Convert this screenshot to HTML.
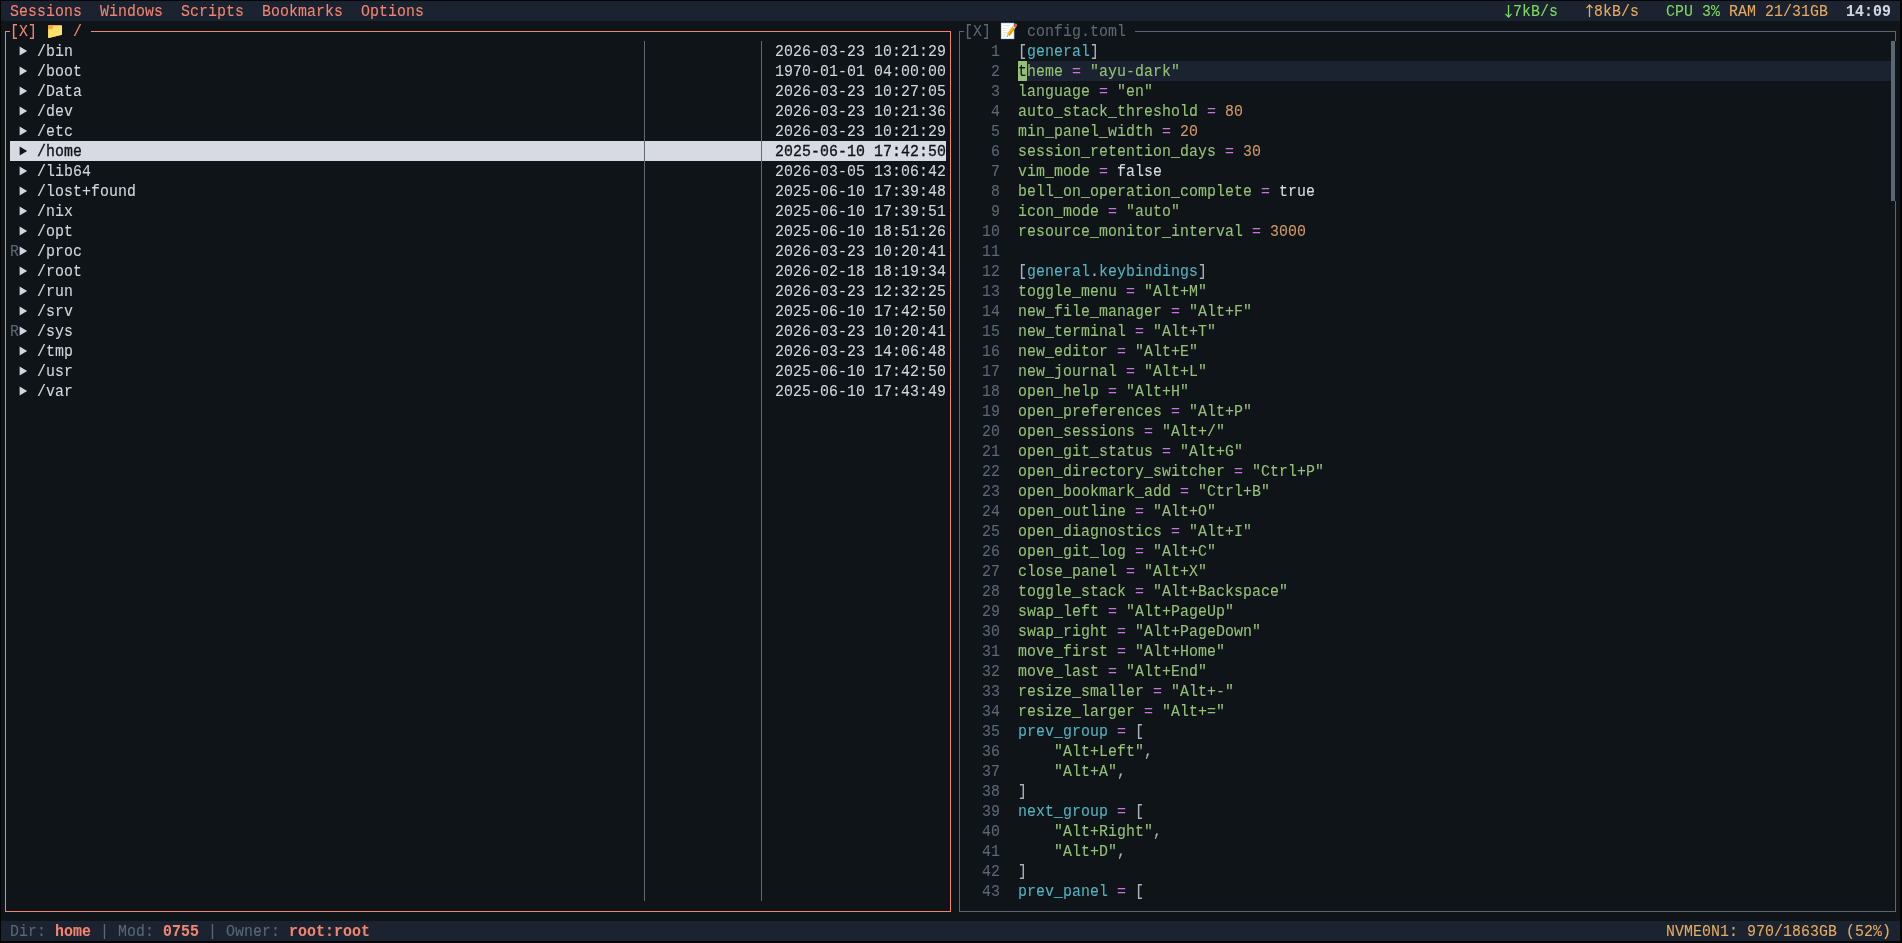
<!DOCTYPE html>
<html><head><meta charset="utf-8"><title>config.toml</title>
<style>
html,body{margin:0;padding:0;background:#050505;overflow:hidden}
body{width:1902px;height:943px;position:relative}
#g{position:absolute;left:1px;top:1px;width:1899px;height:940px;background:#0f1419}
#s{position:absolute;left:1px;top:1px;width:1899px;height:940px;overflow:hidden;will-change:transform;
font-family:"Liberation Mono",monospace;font-size:16.0px;letter-spacing:0.0759px;line-height:20px;
font-kerning:none;-webkit-text-stroke:0.1px;font-variant-ligatures:none}
#s i{position:absolute;display:block}
#s .t{position:absolute;height:20px;white-space:pre;transform:scaleX(0.93);transform-origin:0 0}
#s .a{position:absolute;display:block}
</style></head><body><div id="g"></div><div id="s">
<i style="left:0px;top:0px;width:1899px;height:20px;background:#1b2230"></i>
<i style="left:0px;top:920px;width:1899px;height:20px;background:#1b2230"></i>
<span class="t" style="left:9px;top:1px"><span style="color:#f18570">Sessions  Windows  Scripts  Bookmarks  Options</span></span>
<svg class="a" style="left:1503px;top:0px" width="9" height="20" viewBox="0 0 9 20"><path d="M4.5 3.9V16M1.5 12.9L4.5 16.1L7.5 12.9" fill="none" stroke="#7fd962" stroke-width="1.3"/></svg>
<span class="t" style="left:1512px;top:1px"><span style="color:#7fd962">7kB/s</span></span>
<svg class="a" style="left:1584px;top:0px" width="9" height="20" viewBox="0 0 9 20"><path d="M4.5 4V15.9M1.5 7.1L4.5 3.9L7.5 7.1" fill="none" stroke="#e6ab5e" stroke-width="1.3"/></svg>
<span class="t" style="left:1593px;top:1px"><span style="color:#e6ab5e">8kB/s</span></span>
<span class="t" style="left:1665px;top:1px"><span style="color:#7fd962">CPU 3%</span><span style="color:#d3d6df"> </span><span style="color:#e6ab5e">RAM 21/31GB</span></span>
<span class="t" style="left:1845px;top:1px"><span style="color:#d3d6df;font-weight:bold">14:09</span></span>
<i style="left:4px;top:30px;width:1px;height:881px;background:#f18570"></i>
<i style="left:949px;top:30px;width:1px;height:881px;background:#f18570"></i>
<i style="left:4px;top:30px;width:5px;height:1px;background:#f18570"></i>
<i style="left:90px;top:30px;width:860px;height:1px;background:#f18570"></i>
<i style="left:4px;top:910px;width:946px;height:1px;background:#f18570"></i>
<span class="t" style="left:9px;top:21px"><span style="color:#f18570">[X]</span></span>
<span class="t" style="left:72px;top:21px"><span style="color:#f18570">/</span></span>
<svg class="a" style="left:46px;top:23px" width="17" height="16" viewBox="0 0 17 16"><path d="M1 1.7 Q1 1 1.7 1 L14.3 1 Q15 1 15 1.7 L15 10.7 L1.8 13.9 Q1 14.1 1 13.3 Z" fill="#f2aa3e"/><path d="M1.3 5.2 L5.3 5.2 L6.7 2.1 L15 2.1 L15 10.7 L1.8 13.9 Q1.3 14 1.3 13.4 Z" fill="#fde26c"/></svg>
<i style="left:643px;top:40px;width:1px;height:860px;background:#5f6975"></i>
<i style="left:760px;top:40px;width:1px;height:860px;background:#5f6975"></i>
<svg class="a" style="left:18px;top:45px" width="9" height="10" viewBox="0 0 9 10"><path d="M0.6 0.6 L8.2 5 L0.6 9.4 Z" fill="#d3d6df"/></svg>
<span class="t" style="left:36px;top:41px"><span style="color:#d3d6df">/bin</span></span>
<span class="t" style="left:774px;top:41px"><span style="color:#d3d6df">2026-03-23 10:21:29</span></span>
<svg class="a" style="left:18px;top:65px" width="9" height="10" viewBox="0 0 9 10"><path d="M0.6 0.6 L8.2 5 L0.6 9.4 Z" fill="#d3d6df"/></svg>
<span class="t" style="left:36px;top:61px"><span style="color:#d3d6df">/boot</span></span>
<span class="t" style="left:774px;top:61px"><span style="color:#d3d6df">1970-01-01 04:00:00</span></span>
<svg class="a" style="left:18px;top:85px" width="9" height="10" viewBox="0 0 9 10"><path d="M0.6 0.6 L8.2 5 L0.6 9.4 Z" fill="#d3d6df"/></svg>
<span class="t" style="left:36px;top:81px"><span style="color:#d3d6df">/Data</span></span>
<span class="t" style="left:774px;top:81px"><span style="color:#d3d6df">2026-03-23 10:27:05</span></span>
<svg class="a" style="left:18px;top:105px" width="9" height="10" viewBox="0 0 9 10"><path d="M0.6 0.6 L8.2 5 L0.6 9.4 Z" fill="#d3d6df"/></svg>
<span class="t" style="left:36px;top:101px"><span style="color:#d3d6df">/dev</span></span>
<span class="t" style="left:774px;top:101px"><span style="color:#d3d6df">2026-03-23 10:21:36</span></span>
<svg class="a" style="left:18px;top:125px" width="9" height="10" viewBox="0 0 9 10"><path d="M0.6 0.6 L8.2 5 L0.6 9.4 Z" fill="#d3d6df"/></svg>
<span class="t" style="left:36px;top:121px"><span style="color:#d3d6df">/etc</span></span>
<span class="t" style="left:774px;top:121px"><span style="color:#d3d6df">2026-03-23 10:21:29</span></span>
<i style="left:9px;top:140px;width:936px;height:20px;background:#d8dae3"></i>
<i style="left:643px;top:140px;width:1px;height:20px;background:#5f6975"></i>
<i style="left:760px;top:140px;width:1px;height:20px;background:#5f6975"></i>
<svg class="a" style="left:18px;top:145px" width="9" height="10" viewBox="0 0 9 10"><path d="M0.6 0.6 L8.2 5 L0.6 9.4 Z" fill="#0f1419"/></svg>
<span class="t" style="left:36px;top:141px;-webkit-text-stroke:0.35px"><span style="color:#0f1419">/home</span></span>
<span class="t" style="left:774px;top:141px;-webkit-text-stroke:0.35px"><span style="color:#0f1419">2025-06-10 17:42:50</span></span>
<svg class="a" style="left:18px;top:165px" width="9" height="10" viewBox="0 0 9 10"><path d="M0.6 0.6 L8.2 5 L0.6 9.4 Z" fill="#d3d6df"/></svg>
<span class="t" style="left:36px;top:161px"><span style="color:#d3d6df">/lib64</span></span>
<span class="t" style="left:774px;top:161px"><span style="color:#d3d6df">2026-03-05 13:06:42</span></span>
<svg class="a" style="left:18px;top:185px" width="9" height="10" viewBox="0 0 9 10"><path d="M0.6 0.6 L8.2 5 L0.6 9.4 Z" fill="#d3d6df"/></svg>
<span class="t" style="left:36px;top:181px"><span style="color:#d3d6df">/lost+found</span></span>
<span class="t" style="left:774px;top:181px"><span style="color:#d3d6df">2025-06-10 17:39:48</span></span>
<svg class="a" style="left:18px;top:205px" width="9" height="10" viewBox="0 0 9 10"><path d="M0.6 0.6 L8.2 5 L0.6 9.4 Z" fill="#d3d6df"/></svg>
<span class="t" style="left:36px;top:201px"><span style="color:#d3d6df">/nix</span></span>
<span class="t" style="left:774px;top:201px"><span style="color:#d3d6df">2025-06-10 17:39:51</span></span>
<svg class="a" style="left:18px;top:225px" width="9" height="10" viewBox="0 0 9 10"><path d="M0.6 0.6 L8.2 5 L0.6 9.4 Z" fill="#d3d6df"/></svg>
<span class="t" style="left:36px;top:221px"><span style="color:#d3d6df">/opt</span></span>
<span class="t" style="left:774px;top:221px"><span style="color:#d3d6df">2025-06-10 18:51:26</span></span>
<span class="t" style="left:9px;top:241px"><span style="color:#5c6773">R</span></span>
<svg class="a" style="left:18px;top:245px" width="9" height="10" viewBox="0 0 9 10"><path d="M0.6 0.6 L8.2 5 L0.6 9.4 Z" fill="#d3d6df"/></svg>
<span class="t" style="left:36px;top:241px"><span style="color:#d3d6df">/proc</span></span>
<span class="t" style="left:774px;top:241px"><span style="color:#d3d6df">2026-03-23 10:20:41</span></span>
<svg class="a" style="left:18px;top:265px" width="9" height="10" viewBox="0 0 9 10"><path d="M0.6 0.6 L8.2 5 L0.6 9.4 Z" fill="#d3d6df"/></svg>
<span class="t" style="left:36px;top:261px"><span style="color:#d3d6df">/root</span></span>
<span class="t" style="left:774px;top:261px"><span style="color:#d3d6df">2026-02-18 18:19:34</span></span>
<svg class="a" style="left:18px;top:285px" width="9" height="10" viewBox="0 0 9 10"><path d="M0.6 0.6 L8.2 5 L0.6 9.4 Z" fill="#d3d6df"/></svg>
<span class="t" style="left:36px;top:281px"><span style="color:#d3d6df">/run</span></span>
<span class="t" style="left:774px;top:281px"><span style="color:#d3d6df">2026-03-23 12:32:25</span></span>
<svg class="a" style="left:18px;top:305px" width="9" height="10" viewBox="0 0 9 10"><path d="M0.6 0.6 L8.2 5 L0.6 9.4 Z" fill="#d3d6df"/></svg>
<span class="t" style="left:36px;top:301px"><span style="color:#d3d6df">/srv</span></span>
<span class="t" style="left:774px;top:301px"><span style="color:#d3d6df">2025-06-10 17:42:50</span></span>
<span class="t" style="left:9px;top:321px"><span style="color:#5c6773">R</span></span>
<svg class="a" style="left:18px;top:325px" width="9" height="10" viewBox="0 0 9 10"><path d="M0.6 0.6 L8.2 5 L0.6 9.4 Z" fill="#d3d6df"/></svg>
<span class="t" style="left:36px;top:321px"><span style="color:#d3d6df">/sys</span></span>
<span class="t" style="left:774px;top:321px"><span style="color:#d3d6df">2026-03-23 10:20:41</span></span>
<svg class="a" style="left:18px;top:345px" width="9" height="10" viewBox="0 0 9 10"><path d="M0.6 0.6 L8.2 5 L0.6 9.4 Z" fill="#d3d6df"/></svg>
<span class="t" style="left:36px;top:341px"><span style="color:#d3d6df">/tmp</span></span>
<span class="t" style="left:774px;top:341px"><span style="color:#d3d6df">2026-03-23 14:06:48</span></span>
<svg class="a" style="left:18px;top:365px" width="9" height="10" viewBox="0 0 9 10"><path d="M0.6 0.6 L8.2 5 L0.6 9.4 Z" fill="#d3d6df"/></svg>
<span class="t" style="left:36px;top:361px"><span style="color:#d3d6df">/usr</span></span>
<span class="t" style="left:774px;top:361px"><span style="color:#d3d6df">2025-06-10 17:42:50</span></span>
<svg class="a" style="left:18px;top:385px" width="9" height="10" viewBox="0 0 9 10"><path d="M0.6 0.6 L8.2 5 L0.6 9.4 Z" fill="#d3d6df"/></svg>
<span class="t" style="left:36px;top:381px"><span style="color:#d3d6df">/var</span></span>
<span class="t" style="left:774px;top:381px"><span style="color:#d3d6df">2025-06-10 17:43:49</span></span>
<span class="t" style="left:9px;top:921px"><span style="color:#5c6773">Dir: </span><span style="color:#f18570;font-weight:bold">home</span><span style="color:#5c6773"> | </span><span style="color:#5c6773">Mod: </span><span style="color:#f18570;font-weight:bold">0755</span><span style="color:#5c6773"> | </span><span style="color:#5c6773">Owner: </span><span style="color:#f18570;font-weight:bold">root:root</span></span>
<span class="t" style="left:1665px;top:921px"><span style="color:#e6ab5e">NVME0N1: 970/1863GB (52%)</span></span>
<i style="left:958px;top:30px;width:1px;height:881px;background:#5c6773"></i>
<i style="left:958px;top:30px;width:5px;height:1px;background:#5c6773"></i>
<i style="left:1134px;top:30px;width:761px;height:1px;background:#5c6773"></i>
<i style="left:1894px;top:30px;width:1px;height:10px;background:#5c6773"></i>
<i style="left:1890px;top:40px;width:4px;height:160px;background:#5c6773"></i>
<i style="left:1894px;top:200px;width:1px;height:711px;background:#5c6773"></i>
<i style="left:958px;top:910px;width:937px;height:1px;background:#5c6773"></i>
<span class="t" style="left:963px;top:21px"><span style="color:#5c6773">[X]</span></span>
<span class="t" style="left:1026px;top:21px"><span style="color:#5c6773">config.toml</span></span>
<svg class="a" style="left:999px;top:21px" width="20" height="19" viewBox="0 0 20 19"><rect x="0.9" y="0.8" width="13.4" height="16.3" fill="#b9e0fa"/><rect x="1.9" y="1.7" width="11.5" height="14.5" fill="#ffffff"/><path d="M3 3.6h6M3 6.5h4M3 8.5h3M3 10.6h4.5M3 12.6h3M3 14.6h2.2" stroke="#d3d7dc" stroke-width="0.8"/><g transform="translate(6.8,14.7) rotate(-52.8)"><path d="M0 0 L2.6 -1.65 L2.6 1.65 Z" fill="#f3cf9a"/><path d="M0 0 L1 -0.7 L1 0.7 Z" fill="#3a3a3a"/><rect x="2.6" y="-1.65" width="8.6" height="3.3" fill="#f5b212"/><rect x="2.6" y="0.3" width="8.6" height="1.35" fill="#e89a0c"/><rect x="11.2" y="-1.65" width="1.6" height="3.3" fill="#a9dcea"/><path d="M12.8 -1.65 L14.2 -1.65 Q16.2 -1.65 16.2 0 Q16.2 1.65 14.2 1.65 L12.8 1.65 Z" fill="#f2554b"/></g></svg>
<i style="left:1017px;top:60px;width:873px;height:20px;background:#1b2230"></i>
<i style="left:1017px;top:60px;width:9px;height:20px;background:#96c077"></i>
<span class="t" style="left:963px;top:41px"><span style="color:#5c6773">   1</span></span>
<span class="t" style="left:1017px;top:41px"><span style="color:#abb2bf">[</span><span style="color:#53b2bf">general</span><span style="color:#abb2bf">]</span></span>
<span class="t" style="left:963px;top:61px"><span style="color:#5c6773">   2</span></span>
<span class="t" style="left:1017px;top:61px"><span style="color:#0f1419">t</span><span style="color:#96c077">heme</span><span style="color:#abb2bf"> </span><span style="color:#c678dd">=</span><span style="color:#abb2bf"> </span><span style="color:#96c077">&quot;ayu-dark&quot;</span></span>
<span class="t" style="left:963px;top:81px"><span style="color:#5c6773">   3</span></span>
<span class="t" style="left:1017px;top:81px"><span style="color:#96c077">language</span><span style="color:#abb2bf"> </span><span style="color:#c678dd">=</span><span style="color:#abb2bf"> </span><span style="color:#96c077">&quot;en&quot;</span></span>
<span class="t" style="left:963px;top:101px"><span style="color:#5c6773">   4</span></span>
<span class="t" style="left:1017px;top:101px"><span style="color:#96c077">auto_stack_threshold</span><span style="color:#abb2bf"> </span><span style="color:#c678dd">=</span><span style="color:#abb2bf"> </span><span style="color:#d19a66">80</span></span>
<span class="t" style="left:963px;top:121px"><span style="color:#5c6773">   5</span></span>
<span class="t" style="left:1017px;top:121px"><span style="color:#96c077">min_panel_width</span><span style="color:#abb2bf"> </span><span style="color:#c678dd">=</span><span style="color:#abb2bf"> </span><span style="color:#d19a66">20</span></span>
<span class="t" style="left:963px;top:141px"><span style="color:#5c6773">   6</span></span>
<span class="t" style="left:1017px;top:141px"><span style="color:#96c077">session_retention_days</span><span style="color:#abb2bf"> </span><span style="color:#c678dd">=</span><span style="color:#abb2bf"> </span><span style="color:#d19a66">30</span></span>
<span class="t" style="left:963px;top:161px"><span style="color:#5c6773">   7</span></span>
<span class="t" style="left:1017px;top:161px"><span style="color:#96c077">vim_mode</span><span style="color:#abb2bf"> </span><span style="color:#c678dd">=</span><span style="color:#abb2bf"> </span><span style="color:#d9dbe3">false</span></span>
<span class="t" style="left:963px;top:181px"><span style="color:#5c6773">   8</span></span>
<span class="t" style="left:1017px;top:181px"><span style="color:#96c077">bell_on_operation_complete</span><span style="color:#abb2bf"> </span><span style="color:#c678dd">=</span><span style="color:#abb2bf"> </span><span style="color:#d9dbe3">true</span></span>
<span class="t" style="left:963px;top:201px"><span style="color:#5c6773">   9</span></span>
<span class="t" style="left:1017px;top:201px"><span style="color:#96c077">icon_mode</span><span style="color:#abb2bf"> </span><span style="color:#c678dd">=</span><span style="color:#abb2bf"> </span><span style="color:#96c077">&quot;auto&quot;</span></span>
<span class="t" style="left:963px;top:221px"><span style="color:#5c6773">  10</span></span>
<span class="t" style="left:1017px;top:221px"><span style="color:#96c077">resource_monitor_interval</span><span style="color:#abb2bf"> </span><span style="color:#c678dd">=</span><span style="color:#abb2bf"> </span><span style="color:#d19a66">3000</span></span>
<span class="t" style="left:963px;top:241px"><span style="color:#5c6773">  11</span></span>
<span class="t" style="left:963px;top:261px"><span style="color:#5c6773">  12</span></span>
<span class="t" style="left:1017px;top:261px"><span style="color:#abb2bf">[</span><span style="color:#53b2bf">general</span><span style="color:#abb2bf">.</span><span style="color:#53b2bf">keybindings</span><span style="color:#abb2bf">]</span></span>
<span class="t" style="left:963px;top:281px"><span style="color:#5c6773">  13</span></span>
<span class="t" style="left:1017px;top:281px"><span style="color:#96c077">toggle_menu</span><span style="color:#abb2bf"> </span><span style="color:#c678dd">=</span><span style="color:#abb2bf"> </span><span style="color:#96c077">&quot;Alt+M&quot;</span></span>
<span class="t" style="left:963px;top:301px"><span style="color:#5c6773">  14</span></span>
<span class="t" style="left:1017px;top:301px"><span style="color:#96c077">new_file_manager</span><span style="color:#abb2bf"> </span><span style="color:#c678dd">=</span><span style="color:#abb2bf"> </span><span style="color:#96c077">&quot;Alt+F&quot;</span></span>
<span class="t" style="left:963px;top:321px"><span style="color:#5c6773">  15</span></span>
<span class="t" style="left:1017px;top:321px"><span style="color:#96c077">new_terminal</span><span style="color:#abb2bf"> </span><span style="color:#c678dd">=</span><span style="color:#abb2bf"> </span><span style="color:#96c077">&quot;Alt+T&quot;</span></span>
<span class="t" style="left:963px;top:341px"><span style="color:#5c6773">  16</span></span>
<span class="t" style="left:1017px;top:341px"><span style="color:#96c077">new_editor</span><span style="color:#abb2bf"> </span><span style="color:#c678dd">=</span><span style="color:#abb2bf"> </span><span style="color:#96c077">&quot;Alt+E&quot;</span></span>
<span class="t" style="left:963px;top:361px"><span style="color:#5c6773">  17</span></span>
<span class="t" style="left:1017px;top:361px"><span style="color:#96c077">new_journal</span><span style="color:#abb2bf"> </span><span style="color:#c678dd">=</span><span style="color:#abb2bf"> </span><span style="color:#96c077">&quot;Alt+L&quot;</span></span>
<span class="t" style="left:963px;top:381px"><span style="color:#5c6773">  18</span></span>
<span class="t" style="left:1017px;top:381px"><span style="color:#96c077">open_help</span><span style="color:#abb2bf"> </span><span style="color:#c678dd">=</span><span style="color:#abb2bf"> </span><span style="color:#96c077">&quot;Alt+H&quot;</span></span>
<span class="t" style="left:963px;top:401px"><span style="color:#5c6773">  19</span></span>
<span class="t" style="left:1017px;top:401px"><span style="color:#96c077">open_preferences</span><span style="color:#abb2bf"> </span><span style="color:#c678dd">=</span><span style="color:#abb2bf"> </span><span style="color:#96c077">&quot;Alt+P&quot;</span></span>
<span class="t" style="left:963px;top:421px"><span style="color:#5c6773">  20</span></span>
<span class="t" style="left:1017px;top:421px"><span style="color:#96c077">open_sessions</span><span style="color:#abb2bf"> </span><span style="color:#c678dd">=</span><span style="color:#abb2bf"> </span><span style="color:#96c077">&quot;Alt+/&quot;</span></span>
<span class="t" style="left:963px;top:441px"><span style="color:#5c6773">  21</span></span>
<span class="t" style="left:1017px;top:441px"><span style="color:#96c077">open_git_status</span><span style="color:#abb2bf"> </span><span style="color:#c678dd">=</span><span style="color:#abb2bf"> </span><span style="color:#96c077">&quot;Alt+G&quot;</span></span>
<span class="t" style="left:963px;top:461px"><span style="color:#5c6773">  22</span></span>
<span class="t" style="left:1017px;top:461px"><span style="color:#96c077">open_directory_switcher</span><span style="color:#abb2bf"> </span><span style="color:#c678dd">=</span><span style="color:#abb2bf"> </span><span style="color:#96c077">&quot;Ctrl+P&quot;</span></span>
<span class="t" style="left:963px;top:481px"><span style="color:#5c6773">  23</span></span>
<span class="t" style="left:1017px;top:481px"><span style="color:#96c077">open_bookmark_add</span><span style="color:#abb2bf"> </span><span style="color:#c678dd">=</span><span style="color:#abb2bf"> </span><span style="color:#96c077">&quot;Ctrl+B&quot;</span></span>
<span class="t" style="left:963px;top:501px"><span style="color:#5c6773">  24</span></span>
<span class="t" style="left:1017px;top:501px"><span style="color:#96c077">open_outline</span><span style="color:#abb2bf"> </span><span style="color:#c678dd">=</span><span style="color:#abb2bf"> </span><span style="color:#96c077">&quot;Alt+O&quot;</span></span>
<span class="t" style="left:963px;top:521px"><span style="color:#5c6773">  25</span></span>
<span class="t" style="left:1017px;top:521px"><span style="color:#96c077">open_diagnostics</span><span style="color:#abb2bf"> </span><span style="color:#c678dd">=</span><span style="color:#abb2bf"> </span><span style="color:#96c077">&quot;Alt+I&quot;</span></span>
<span class="t" style="left:963px;top:541px"><span style="color:#5c6773">  26</span></span>
<span class="t" style="left:1017px;top:541px"><span style="color:#96c077">open_git_log</span><span style="color:#abb2bf"> </span><span style="color:#c678dd">=</span><span style="color:#abb2bf"> </span><span style="color:#96c077">&quot;Alt+C&quot;</span></span>
<span class="t" style="left:963px;top:561px"><span style="color:#5c6773">  27</span></span>
<span class="t" style="left:1017px;top:561px"><span style="color:#96c077">close_panel</span><span style="color:#abb2bf"> </span><span style="color:#c678dd">=</span><span style="color:#abb2bf"> </span><span style="color:#96c077">&quot;Alt+X&quot;</span></span>
<span class="t" style="left:963px;top:581px"><span style="color:#5c6773">  28</span></span>
<span class="t" style="left:1017px;top:581px"><span style="color:#96c077">toggle_stack</span><span style="color:#abb2bf"> </span><span style="color:#c678dd">=</span><span style="color:#abb2bf"> </span><span style="color:#96c077">&quot;Alt+Backspace&quot;</span></span>
<span class="t" style="left:963px;top:601px"><span style="color:#5c6773">  29</span></span>
<span class="t" style="left:1017px;top:601px"><span style="color:#96c077">swap_left</span><span style="color:#abb2bf"> </span><span style="color:#c678dd">=</span><span style="color:#abb2bf"> </span><span style="color:#96c077">&quot;Alt+PageUp&quot;</span></span>
<span class="t" style="left:963px;top:621px"><span style="color:#5c6773">  30</span></span>
<span class="t" style="left:1017px;top:621px"><span style="color:#96c077">swap_right</span><span style="color:#abb2bf"> </span><span style="color:#c678dd">=</span><span style="color:#abb2bf"> </span><span style="color:#96c077">&quot;Alt+PageDown&quot;</span></span>
<span class="t" style="left:963px;top:641px"><span style="color:#5c6773">  31</span></span>
<span class="t" style="left:1017px;top:641px"><span style="color:#96c077">move_first</span><span style="color:#abb2bf"> </span><span style="color:#c678dd">=</span><span style="color:#abb2bf"> </span><span style="color:#96c077">&quot;Alt+Home&quot;</span></span>
<span class="t" style="left:963px;top:661px"><span style="color:#5c6773">  32</span></span>
<span class="t" style="left:1017px;top:661px"><span style="color:#96c077">move_last</span><span style="color:#abb2bf"> </span><span style="color:#c678dd">=</span><span style="color:#abb2bf"> </span><span style="color:#96c077">&quot;Alt+End&quot;</span></span>
<span class="t" style="left:963px;top:681px"><span style="color:#5c6773">  33</span></span>
<span class="t" style="left:1017px;top:681px"><span style="color:#96c077">resize_smaller</span><span style="color:#abb2bf"> </span><span style="color:#c678dd">=</span><span style="color:#abb2bf"> </span><span style="color:#96c077">&quot;Alt+-&quot;</span></span>
<span class="t" style="left:963px;top:701px"><span style="color:#5c6773">  34</span></span>
<span class="t" style="left:1017px;top:701px"><span style="color:#96c077">resize_larger</span><span style="color:#abb2bf"> </span><span style="color:#c678dd">=</span><span style="color:#abb2bf"> </span><span style="color:#96c077">&quot;Alt+=&quot;</span></span>
<span class="t" style="left:963px;top:721px"><span style="color:#5c6773">  35</span></span>
<span class="t" style="left:1017px;top:721px"><span style="color:#53b2bf">prev_group</span><span style="color:#abb2bf"> </span><span style="color:#c678dd">=</span><span style="color:#abb2bf"> </span><span style="color:#abb2bf">[</span></span>
<span class="t" style="left:963px;top:741px"><span style="color:#5c6773">  36</span></span>
<span class="t" style="left:1017px;top:741px"><span style="color:#abb2bf">    </span><span style="color:#96c077">&quot;Alt+Left&quot;</span><span style="color:#abb2bf">,</span></span>
<span class="t" style="left:963px;top:761px"><span style="color:#5c6773">  37</span></span>
<span class="t" style="left:1017px;top:761px"><span style="color:#abb2bf">    </span><span style="color:#96c077">&quot;Alt+A&quot;</span><span style="color:#abb2bf">,</span></span>
<span class="t" style="left:963px;top:781px"><span style="color:#5c6773">  38</span></span>
<span class="t" style="left:1017px;top:781px"><span style="color:#abb2bf">]</span></span>
<span class="t" style="left:963px;top:801px"><span style="color:#5c6773">  39</span></span>
<span class="t" style="left:1017px;top:801px"><span style="color:#53b2bf">next_group</span><span style="color:#abb2bf"> </span><span style="color:#c678dd">=</span><span style="color:#abb2bf"> </span><span style="color:#abb2bf">[</span></span>
<span class="t" style="left:963px;top:821px"><span style="color:#5c6773">  40</span></span>
<span class="t" style="left:1017px;top:821px"><span style="color:#abb2bf">    </span><span style="color:#96c077">&quot;Alt+Right&quot;</span><span style="color:#abb2bf">,</span></span>
<span class="t" style="left:963px;top:841px"><span style="color:#5c6773">  41</span></span>
<span class="t" style="left:1017px;top:841px"><span style="color:#abb2bf">    </span><span style="color:#96c077">&quot;Alt+D&quot;</span><span style="color:#abb2bf">,</span></span>
<span class="t" style="left:963px;top:861px"><span style="color:#5c6773">  42</span></span>
<span class="t" style="left:1017px;top:861px"><span style="color:#abb2bf">]</span></span>
<span class="t" style="left:963px;top:881px"><span style="color:#5c6773">  43</span></span>
<span class="t" style="left:1017px;top:881px"><span style="color:#53b2bf">prev_panel</span><span style="color:#abb2bf"> </span><span style="color:#c678dd">=</span><span style="color:#abb2bf"> </span><span style="color:#abb2bf">[</span></span>
</div></body></html>
